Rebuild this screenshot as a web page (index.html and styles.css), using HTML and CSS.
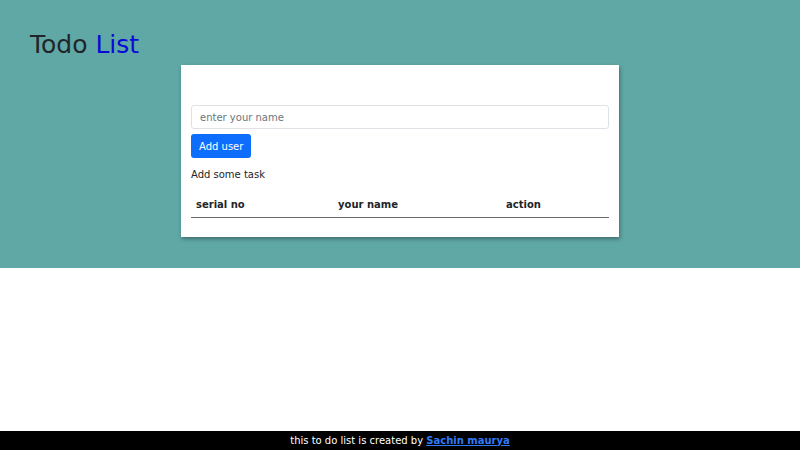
FILE: index.html
```html
<!DOCTYPE html>
<html lang="en">
<head>
<meta charset="utf-8">
<title>Todo List</title>
<link rel="stylesheet" href="styles.css">
</head>
<body>
<div class="page">
  <section class="hero">
    <h1 class="title">Todo <span class="accent">List</span></h1>
    <div class="card">
      <input class="name-input" type="text" placeholder="enter your name">
      <button class="btn" type="button">Add user</button>
      <p class="hint">Add some task</p>
      <table class="tasks">
        <thead>
          <tr>
            <th class="col-serial">serial no</th>
            <th class="col-name">your name</th>
            <th class="col-action">action</th>
          </tr>
        </thead>
        <tbody></tbody>
      </table>
    </div>
  </section>
  <main class="spacer"></main>
  <footer class="footer">this to do list is created by <a href="#" class="author">Sachin maurya</a></footer>
</div>
</body>
</html>
```

FILE: styles.css
```css
* { box-sizing: border-box; }
html, body { margin: 0; padding: 0; }
body {
  font-family: "DejaVu Sans", sans-serif;
  font-size: 10px;
  color: #212529;
  background: #ffffff;
}
.page {
  min-height: 100vh;
  display: flex;
  flex-direction: column;
}
.hero {
  background: #5fa8a6;
  height: 268px;
  padding: 30px 30px 0;
}
.title {
  margin: 0;
  font-size: 25px;
  font-weight: 400;
  line-height: 30px;
  color: #212529;
}
.accent { color: #0a0ad8; }
.card {
  width: 438px;
  margin: 5px auto 0;
  background: #ffffff;
  padding: 40px 10px 19px;
  box-shadow: 1px 2px 4px rgba(0, 0, 0, 0.35);
  display: flex;
  flex-direction: column;
  align-items: flex-start;
}
.name-input {
  width: 100%;
  height: 24px;
  border: 1px solid #dee2e6;
  border-radius: 3px;
  padding: 0 8px;
  font-family: inherit;
  font-size: 10px;
  color: #212529;
}
.name-input::placeholder { color: #6c757d; }
.btn {
  margin-top: 5px;
  height: 24px;
  padding: 0 8px;
  border: 0;
  border-radius: 3px;
  background: #0d6efd;
  color: #ffffff;
  font-family: inherit;
  font-size: 10px;
}
.hint {
  margin: 11px 0 0;
  line-height: 12px;
}
.tasks {
  width: 100%;
  margin-top: 14px;
  border-collapse: collapse;
}
.tasks th {
  text-align: left;
  font-weight: 700;
  padding: 4px 5px 6px;
  border-bottom: 1.5px solid #6a6a6a;
  line-height: 12px;
}
.col-serial { width: 142px; }
.col-name { width: 168px; }
.spacer { flex: 1; }
.footer {
  background: #000000;
  color: #ffffff;
  text-align: center;
  height: 19px;
  line-height: 19px;
  font-size: 10px;
}
.author {
  color: #2f7bf5;
  font-weight: 700;
  text-decoration: underline;
}
```
